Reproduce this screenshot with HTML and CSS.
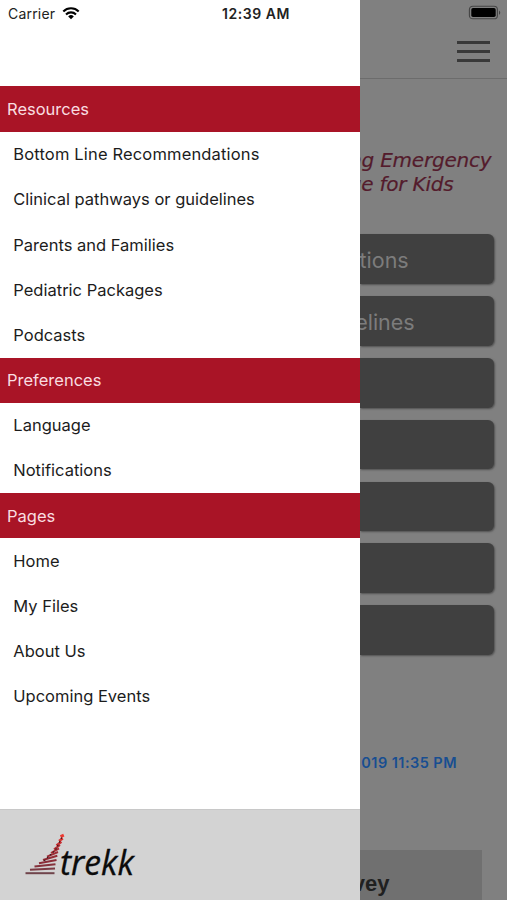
FILE: index.html
```html
<!DOCTYPE html>
<html lang="en">
<head>
<meta charset="utf-8">
<title>trekk</title>
<link rel="stylesheet" href="styles.css">
</head>
<body>
<div class="screen">
  <aside class="drawer">
    <header class="status">
      <span class="carrier">Carrier</span>
      <svg class="wifi" viewBox="0 0 18 14" width="18" height="14">
        <path d="M1.3 5.4a11 11 0 0 1 15.4 0M4 8.4a7.2 7.2 0 0 1 10 0" fill="none" stroke="#000" stroke-width="2.1"/>
        <path d="M9 13.2 6.2 10.4a4 4 0 0 1 5.6 0z"/>
      </svg>
      <span class="time">12:39 AM</span>
    </header>
    <nav class="menu">
      <h2 class="section">Resources</h2>
      <a class="item item-wide">Bottom Line Recommendations</a>
      <a class="item">Clinical pathways or guidelines</a>
      <a class="item">Parents and Families</a>
      <a class="item">Pediatric Packages</a>
      <a class="item">Podcasts</a>
      <h2 class="section">Preferences</h2>
      <a class="item">Language</a>
      <a class="item">Notifications</a>
      <h2 class="section">Pages</h2>
      <a class="item">Home</a>
      <a class="item">My Files</a>
      <a class="item">About Us</a>
      <a class="item">Upcoming Events</a>
    </nav>
    <footer class="brand">
      <svg class="logo" viewBox="0 0 112 46" width="112" height="46">
        <g fill="none" stroke-width="2">
          <path d="M.5 41.2H29.5" stroke="#70444b"/>
          <path d="M5 37.8 30 36.6" stroke="#7b3a43"/>
          <path d="M9.5 34.6 30.5 32.2" stroke="#85323c"/>
          <path d="M14 31.2 31.5 28" stroke="#8b2d38"/>
          <path d="M18 28 32.3 23.8" stroke="#942c37"/>
          <path d="M22 24.6 33 20" stroke="#9d2c36"/>
          <path d="M26 21 34 16.4" stroke="#a92d35"/>
          <path d="M29 17.4 35 13" stroke="#b52f35"/>
          <path d="M31.5 13.5 36.4 9.8" stroke="#c93135" stroke-width="2.5"/>
          <path d="M34 9 37.8 6.4" stroke="#db3533" stroke-width="2.5"/>
          <path d="M35.5 4.6 38.8 3.2" stroke="#ec3931" stroke-width="3"/>
        </g>
        <path d="M36.8 5.5 30.5 18 19 29" fill="none" stroke="#37191b" stroke-width="1.1" stroke-dasharray="1.8 2.2"/>
        <text class="wordmark" x="35" y="42.5" textLength="74" lengthAdjust="spacingAndGlyphs">trekk</text>
      </svg>
    </footer>
  </aside>
  <main class="page">
    <div class="topbar">
      <svg class="battery" viewBox="0 0 34 16" width="34" height="16">
        <rect x="1.4" y="1.2" width="28" height="12.6" rx="3.4" fill="none" stroke="#444" stroke-width="1.1"/>
        <rect x="3.3" y="3" width="24.4" height="9" rx="1.7"/>
        <path d="M31 5.4c1.7.8 1.7 3.5 0 4.3z" fill="#444"/>
      </svg>
      <div class="burger"><i></i><i></i><i></i></div>
    </div>
    <div class="tagline">
      <span class="tag-one">ng Emergency</span>
      <span class="tag-two">ge for Kids</span>
    </div>
    <div class="buttons">
      <div class="button"><span class="label-one">tions</span></div>
      <div class="button"><span class="label-two">elines</span></div>
      <div class="button"></div>
      <div class="button"></div>
      <div class="button"></div>
      <div class="button"></div>
      <div class="button"></div>
    </div>
    <div class="updated">019 11:35 PM</div>
    <div class="survey">vey</div>
  </main>
</div>
</body>
</html>
```
FILE: styles.css
```css
* { box-sizing: border-box; }
body { margin: 0; background: #808080; font-family: Inter, "Liberation Sans", sans-serif; }
.screen { width: 507px; height: 900px; display: grid; grid-template-columns: 360.4px 1fr; overflow: hidden; }
.drawer { background: #fff; display: flex; flex-direction: column; height: 900px; min-width: 0; }
.status { height: 86.4px; display: flex; align-items: flex-start; padding: 5px 0 0 8px; color: #222; font-size: 14px; line-height: 18px; flex: none; }
.carrier { width: 54px; letter-spacing: .2px; }
.wifi { margin-top: 1px; }
.time { margin-left: 142px; font-weight: 600; white-space: nowrap; letter-spacing: .55px; }
.menu { flex: 1; }
.section, .item { display: flex; align-items: center; height: 45.2px; margin: 0; font-size: 16.5px; font-weight: 400; white-space: nowrap; }
.section { background: #a91426; color: #f9dde0; padding-left: 7px; }
.item { padding: 0 0 0 13.3px; color: #1c1c1c; }
.item-wide { letter-spacing: .16px; }
.brand { height: 91.5px; background: #d3d3d3; border-top: 1px solid #c8c8c8; padding: 22px 0 0 25px; flex: none; }
.logo { display: block; overflow: visible; }
.wordmark { font: italic 400 35px "Open Sans", "Noto Sans", sans-serif; fill: #0b0b0b; stroke: #0b0b0b; stroke-width: .3px; }
.page { background: #808080; overflow: hidden; height: 900px; min-width: 0; }
.topbar { height: 79px; border-bottom: 1px solid #6c6c6c; padding: 5px 6px 0 0; display: flex; flex-direction: column; align-items: flex-end; }
.battery { display: block; margin-right: -1px; }
.burger { display: flex; flex-direction: column; gap: 6px; margin: 20px 11.5px 0 0; width: 33px; }
.burger i { height: 3px; background: #393939; }
.tagline { height: 155.4px; padding: 69px 15.5px 0 0; display: flex; flex-direction: column; align-items: flex-end; font: italic 400 20px/24px "DejaVu Sans", sans-serif; letter-spacing: -.2px; color: #541b2c; -webkit-text-stroke: .2px #541b2c; white-space: nowrap; }
.tag-two { margin-right: 38px; }
.buttons { display: flex; flex-direction: column; gap: 12.2px; padding-right: 13.3px; }
.button { height: 49.6px; background: #404040; border-radius: 0 6px 6px 0; box-shadow: 1px 1px 2px #505050; display: flex; align-items: center; justify-content: flex-end; padding-top: 2px; font-size: 21.5px; color: #7c7c7c; }
.label-one { margin-right: 85px; }
.label-two { margin-right: 79px; }
.updated { height: 195.8px; padding: 99px 50px 0 0; font-size: 14.5px; line-height: 18px; font-weight: 600; letter-spacing: .45px; color: #184e91; text-align: right; white-space: nowrap; }
.survey { height: 60px; margin-right: 25px; background: #707070; padding: 21px 92.5px 0 0; font: 700 22px/26px "Liberation Sans", sans-serif; color: #202020; display: flex; justify-content: flex-end; }
```
